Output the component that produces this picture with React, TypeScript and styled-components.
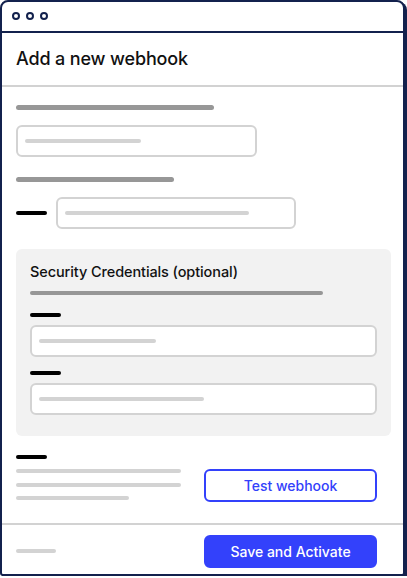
import React from 'react';
import styled, { createGlobalStyle } from 'styled-components';

const navy = '#13214d';
const divider = '#d2d2d2';
const blue = '#3341fb';

const GlobalStyle = createGlobalStyle`
  html, body {
    margin: 0;
    padding: 0;
    background: #ffffff;
  }
  body {
    font-family: Inter, "Noto Sans", "Liberation Sans", sans-serif;
    color: #111111;
  }
  * {
    box-sizing: border-box;
  }
`;

const Window = styled.div`
  display: flex;
  flex-direction: column;
  width: 405px;
  height: 576px;
  border: 2px solid ${navy};
  border-radius: 8px 8px 3px 3px;
  box-shadow: 2px 2px 0 ${navy};
  background: #ffffff;
  overflow: hidden;
`;

const TitleBar = styled.div`
  display: flex;
  align-items: center;
  gap: 6px;
  height: 31px;
  padding: 0 0 2px 10px;
  border-bottom: 2px solid ${navy};
`;

const Dot = styled.span`
  width: 8px;
  height: 8px;
  border: 2px solid ${navy};
  border-radius: 50%;
`;

const Header = styled.header`
  display: flex;
  align-items: center;
  height: 54px;
  padding: 0 14px 1px;
  border-bottom: 2px solid ${divider};
`;

const Title = styled.h1`
  margin: 0;
  font-size: 18px;
  font-weight: 500;
  letter-spacing: -0.15px;
`;

const Body = styled.div`
  display: flex;
  flex-direction: column;
  padding: 18px 12px 21px 14px;
`;

const Bar = styled.div<{ $w: number; $tone?: 'label' | 'dark' | 'hint'; $h?: number }>`
  flex-shrink: 0;
  width: ${({ $w }) => $w}px;
  height: ${({ $h }) => $h ?? 4}px;
  border-radius: 3px;
  background: ${({ $tone }) =>
    $tone === 'dark' ? '#000000' : $tone === 'hint' ? '#d3d3d3' : '#979797'};
`;

const Field = styled.div<{ $w?: number }>`
  display: flex;
  align-items: center;
  width: ${({ $w }) => ($w ? `${$w}px` : '100%')};
  height: 32px;
  padding: 0 7px;
  border: 2px solid #d3d3d3;
  border-radius: 6px;
  background: #ffffff;
`;

const Stack = styled.div<{ $gap: number; $top?: number }>`
  display: flex;
  flex-direction: column;
  gap: ${({ $gap }) => $gap}px;
  margin-top: ${({ $top }) => $top ?? 0}px;
`;

const Row = styled.div<{ $gap: number; $top?: number }>`
  display: flex;
  align-items: center;
  gap: ${({ $gap }) => $gap}px;
  margin-top: ${({ $top }) => $top ?? 0}px;
`;

const Section = styled.section`
  display: flex;
  flex-direction: column;
  margin-top: 20px;
  padding: 13px 14px 21px;
  border-radius: 6px;
  background: #f2f2f2;
`;

const SectionTitle = styled.h2`
  margin: 0;
  font-size: 14.5px;
  font-weight: 500;
  line-height: 20px;
  letter-spacing: -0.1px;
`;

const TestRow = styled.div`
  display: flex;
  align-items: flex-start;
  gap: 23px;
  margin-top: 10px;
`;

const Button = styled.button<{ $primary?: boolean }>`
  width: 173px;
  height: 33px;
  border: 2px solid ${blue};
  border-radius: 6px;
  background: ${({ $primary }) => ($primary ? blue : '#ffffff')};
  color: ${({ $primary }) => ($primary ? '#ffffff' : blue)};
  font-family: inherit;
  font-size: 14px;
  font-weight: 500;
  cursor: pointer;
`;

const Footer = styled.footer`
  display: flex;
  align-items: center;
  justify-content: space-between;
  flex: 1;
  padding: 3px 26px 0 14px;
  border-top: 2px solid ${divider};
`;

function App() {
  return (
    <>
      <GlobalStyle />
      <Window>
        <TitleBar>
          <Dot />
          <Dot />
          <Dot />
        </TitleBar>
        <Header>
          <Title>Add a new webhook</Title>
        </Header>
        <Body>
          <Bar $w={198} $h={5} />
          <Field $w={241} style={{ marginTop: 15 }}>
            <Bar $w={116} $tone="hint" />
          </Field>
          <Bar $w={158} $h={5} style={{ marginTop: 20 }} />
          <Row $gap={9} $top={15}>
            <Bar $w={31} $tone="dark" />
            <Field $w={240}>
              <Bar $w={184} $tone="hint" />
            </Field>
          </Row>
          <Section>
            <SectionTitle>Security Credentials (optional)</SectionTitle>
            <Bar $w={293} style={{ marginTop: 9 }} />
            <Stack $gap={8} $top={18}>
              <Bar $w={31} $tone="dark" />
              <Field>
                <Bar $w={117} $tone="hint" />
              </Field>
            </Stack>
            <Stack $gap={8} $top={14}>
              <Bar $w={31} $tone="dark" />
              <Field>
                <Bar $w={165} $tone="hint" />
              </Field>
            </Stack>
          </Section>
          <Bar $w={31} $tone="dark" style={{ marginTop: 19 }} />
          <TestRow>
            <Stack $gap={9.5}>
              <Bar $w={165} $tone="hint" />
              <Bar $w={165} $tone="hint" />
              <Bar $w={113} $tone="hint" />
            </Stack>
            <Button type="button">Test webhook</Button>
          </TestRow>
        </Body>
        <Footer>
          <Bar $w={40} $tone="hint" />
          <Button type="button" $primary>
            Save and Activate
          </Button>
        </Footer>
      </Window>
    </>
  );
}

export default App;
